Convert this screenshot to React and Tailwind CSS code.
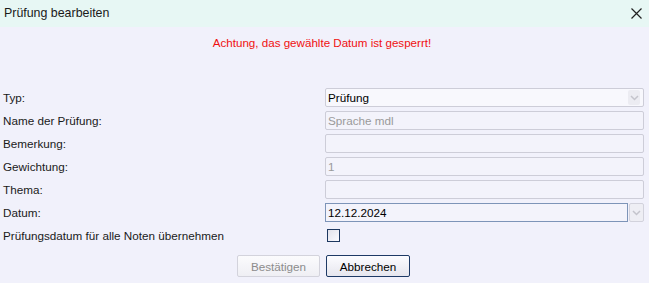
import React from "react";

const font = { fontFamily: '"Liberation Sans", Arial, sans-serif' };

function Chevron({ className = "" }) {
  return (
    <svg width="9" height="6" viewBox="0 0 9 6" className={className}>
      <path d="M1 1 L4.5 4.5 L8 1" fill="none" stroke="#c4c4cc" strokeWidth="1.5" />
    </svg>
  );
}

function Box({ children, className = "" }) {
  return (
    <div className={`h-[19px] border border-[#cdcdd8] bg-[#f3f3fb] rounded-[2px] flex items-center px-[2px] ${className}`}>
      {children}
    </div>
  );
}

export default function App() {
  const rows = [
    "Typ:",
    "Name der Prüfung:",
    "Bemerkung:",
    "Gewichtung:",
    "Thema:",
    "Datum:",
  ];
  return (
    <div className="w-[649px] h-[283px] bg-[#f1f1fb] flex flex-col overflow-hidden" style={font}>
      <div className="h-[27px] bg-[#e7f7f4] flex items-center justify-between pl-[4px] pr-[7px]">
        <span className="text-[12.4px] text-[#1a1a1a]">Prüfung bearbeiten</span>
        <svg width="11" height="11" viewBox="0 0 11 11">
          <path d="M0.5 0.5 L10.5 10.5 M10.5 0.5 L0.5 10.5" stroke="#222" strokeWidth="1.2" />
        </svg>
      </div>
      <div className="flex justify-center pt-[7px] pr-[5px]">
        <span className="text-[11.6px] text-[#f01010]">Achtung, das gewählte Datum ist gesperrt!</span>
      </div>
      <div className="grid grid-cols-[322px_319px] gap-y-[4px] pl-[3px] mt-[37px] text-[11.7px] text-[#1a1a1a]">
        <div className="h-[19px] flex items-center">Typ:</div>
        <div className="h-[19px] border border-[#cdcdd8] bg-[#f8f8fd] rounded-[2px] flex items-center justify-between pl-[2px] pr-[3px]">
          <span className="text-black">Prüfung</span>
          <div className="w-[12px] h-[15px] bg-[#ececf2] flex items-center justify-center rounded-[2px]">
            <Chevron />
          </div>
        </div>
        <div className="h-[19px] flex items-center">{rows[1]}</div>
        <Box className="text-[#9a9a9a]">Sprache mdl</Box>
        <div className="h-[19px] flex items-center">{rows[2]}</div>
        <Box />
        <div className="h-[19px] flex items-center">{rows[3]}</div>
        <Box className="text-[#9a9a9a]">1</Box>
        <div className="h-[19px] flex items-center">{rows[4]}</div>
        <Box />
        <div className="h-[19px] flex items-center">{rows[5]}</div>
        <div className="flex gap-[1px]">
          <div className="flex-1 h-[19px] border border-[#7d94b8] bg-[#f3f3fb] flex items-center px-[2px] text-black">12.12.2024</div>
          <div className="w-[15px] h-[19px] border border-[#d2d2dc] bg-[#eeeef4] rounded-[2px] flex items-center justify-center">
            <Chevron />
          </div>
        </div>
        <div className="h-[19px] flex items-center">Prüfungsdatum für alle Noten übernehmen</div>
        <div className="h-[19px] flex items-center pl-[2px]">
          <div className="w-[13px] h-[13px] border border-[#1d3860] bg-gradient-to-br from-[#e2e2ea] to-[#fafaff]" />
        </div>
      </div>
      <div className="flex justify-center gap-[6px] mt-[10px] pr-[2px]">
        <div className="w-[83px] h-[22px] border border-[#d3d3dc] rounded-[2px] bg-gradient-to-b from-[#fbfbfd] to-[#efeff4] flex items-center justify-center text-[11.7px] text-[#8c8c8c]">
          Bestätigen
        </div>
        <div className="w-[84px] h-[22px] border border-[#1e3a66] rounded-[2px] bg-gradient-to-b from-[#fcfcff] to-[#e6e6ee] flex items-center justify-center text-[11.7px] text-black">
          Abbrechen
        </div>
      </div>
    </div>
  );
}
